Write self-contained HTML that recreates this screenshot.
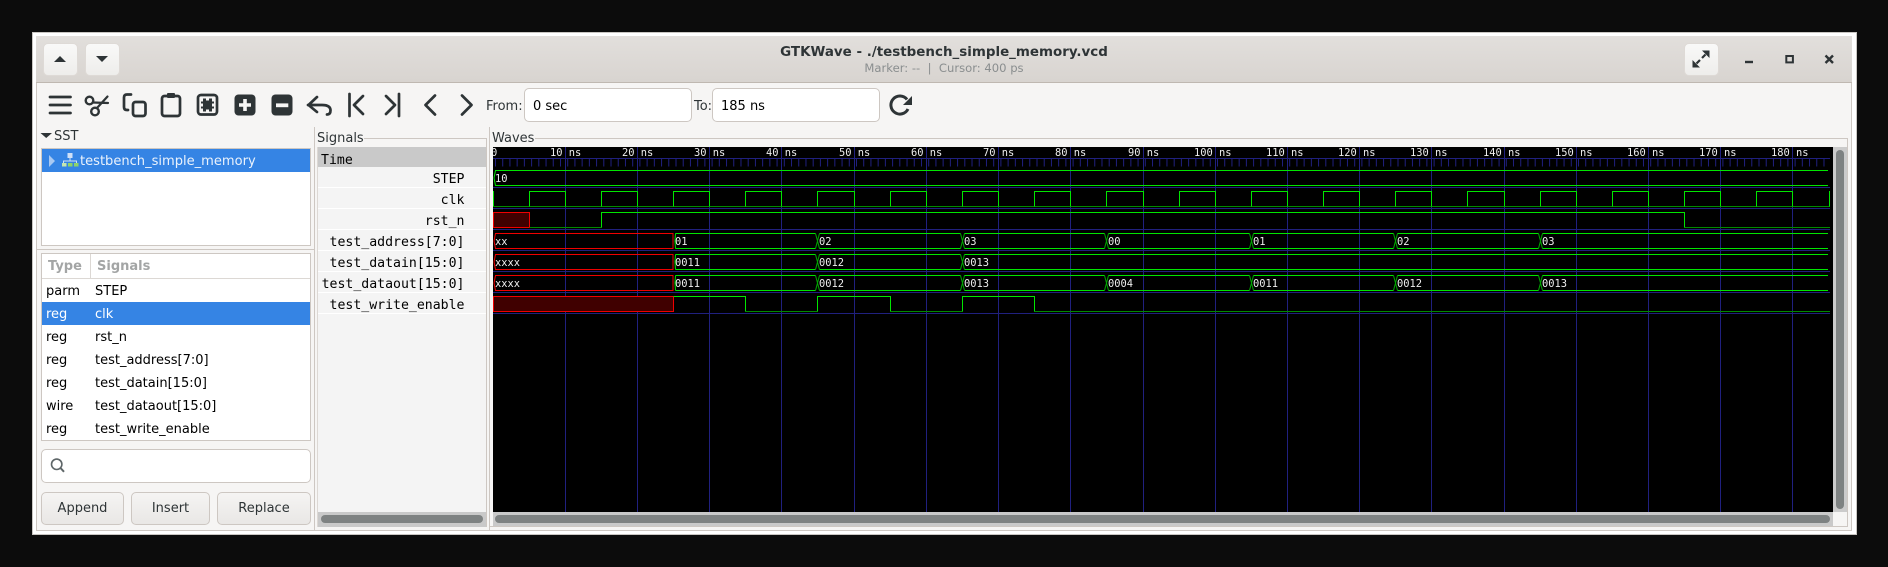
<!DOCTYPE html>
<html><head><meta charset="utf-8"><title>GTKWave</title>
<style>
html,body{margin:0;padding:0;width:1888px;height:567px;overflow:hidden;background:#0c0c0c}
body{font-family:"DejaVu Sans",sans-serif;font-size:13px;color:#2e3436;position:relative}
.a{position:absolute;box-sizing:border-box}
.t{position:absolute;white-space:nowrap;line-height:16px}
.hb{position:absolute;top:42.5px;width:35px;height:33px;border-radius:5px;background:linear-gradient(#f9f9f8,#eeedeb);border:1px solid #dedad6;box-sizing:border-box}
.btn{position:absolute;top:492px;height:33px;box-sizing:border-box;border:1px solid #cdc7c2;border-radius:5px;background:linear-gradient(#f5f4f3,#e9e7e5);text-align:center;line-height:32px;font-size:13px;color:#2e3436}
.entry{position:absolute;top:88px;height:34px;box-sizing:border-box;border:1px solid #cdc7c2;border-radius:5px;background:#fff;font-size:13px;line-height:35px;padding-left:8px;color:#000}
.m{font-family:"DejaVu Sans Mono",monospace;font-size:13.2px;color:#000;text-align:right;right:1423.5px}
.r{position:absolute;left:42px;width:268px;height:23px;line-height:25.5px;color:#000;white-space:nowrap}
.r b{font-weight:normal;position:absolute;left:4px}
.r i{font-style:normal;position:absolute;left:53px}
.sel{background:#3584e4;color:#fff}
svg text{font-family:"DejaVu Sans Mono",monospace;font-size:10.4px;fill:#eee}
</style></head><body>
<!-- window -->
<div class="a" style="left:32px;top:32px;width:1825px;height:503px;background:#fff;border:1px solid #c9c6c2"></div>
<div class="a" style="left:36px;top:36px;width:1816px;height:495px;background:#f6f5f4;border-left:1px solid #cdc7c2;border-right:1px solid #cdc7c2;border-bottom:1px solid #cdc7c2"></div>
<div class="a" style="left:36px;top:36px;width:1816px;height:47px;background:linear-gradient(#e2dfdc,#d8d4d0);border-bottom:1px solid #bfb8b1"></div>
<div class="hb" style="left:42.5px"></div>
<div class="hb" style="left:84.5px"></div>
<div class="hb" style="left:1683.5px"></div>
<div class="t" style="left:600px;width:688px;text-align:center;top:45px;font-weight:bold;font-size:13.44px;color:#2e3436">GTKWave - ./testbench_simple_memory.vcd</div>
<div class="t" style="left:600px;width:688px;text-align:center;top:60px;font-size:11.6px;color:#8a8e8f;white-space:pre">Marker: --  |  Cursor: 400 ps</div>
<!-- toolbar text -->
<div class="t" style="left:486px;top:98.5px;color:#2e3436">From:</div>
<div class="entry" style="left:524px;width:168px">0 sec</div>
<div class="t" style="left:694px;top:98.5px;color:#2e3436">To:</div>
<div class="entry" style="left:712px;width:168px">185 ns</div>
<!-- panes -->
<div class="a" style="left:314px;top:127px;width:1px;height:403px;background:#cdc7c2"></div>
<div class="a" style="left:489px;top:127px;width:1px;height:403px;background:#cdc7c2"></div>
<div class="a" style="left:37px;top:249px;width:277px;height:1px;background:#cdc7c2"></div>
<div class="t" style="left:54px;top:129px;color:#2e3436">SST</div>
<!-- tree -->
<div class="a" style="left:41px;top:148px;width:270px;height:98px;background:#fff;border:1px solid #cdc7c2"></div>
<div class="a sel" style="left:42px;top:149px;width:268px;height:23px"></div>
<div class="t" style="left:80px;top:154px;font-size:13.05px;color:#eaf2fc">testbench_simple_memory</div>
<!-- list -->
<div class="a" style="left:41px;top:253px;width:270px;height:188px;background:#fff;border:1px solid #cdc7c2"></div>
<div class="a" style="left:42px;top:278px;width:268px;height:1px;background:#dcd8d4"></div>
<div class="a" style="left:90px;top:254px;width:1px;height:24px;background:#dcd8d4"></div>
<div class="t" style="left:48px;top:259px;font-weight:bold;color:#a3a5a5">Type</div>
<div class="t" style="left:97px;top:259px;font-weight:bold;color:#a3a5a5">Signals</div>
<div class="r" style="top:279px"><b>parm</b><i>STEP</i></div>
<div class="r sel" style="top:302px"><b>reg</b><i>clk</i></div>
<div class="r" style="top:325px"><b>reg</b><i>rst_n</i></div>
<div class="r" style="top:348px"><b>reg</b><i>test_address[7:0]</i></div>
<div class="r" style="top:371px"><b>reg</b><i>test_datain[15:0]</i></div>
<div class="r" style="top:394px"><b>wire</b><i>test_dataout[15:0]</i></div>
<div class="r" style="top:417px"><b>reg</b><i>test_write_enable</i></div>
<!-- search -->
<div class="a" style="left:41px;top:449px;width:270px;height:34px;background:#fff;border:1px solid #cdc7c2;border-radius:5px"></div>
<div class="btn" style="left:41px;width:83px">Append</div>
<div class="btn" style="left:131px;width:79px">Insert</div>
<div class="btn" style="left:217px;width:94px">Replace</div>
<!-- signals frame -->
<div class="t" style="left:317px;top:131px;color:#2e3436">Signals</div>
<div class="a" style="left:364px;top:138px;width:123px;height:1px;background:#cdc7c2"></div>
<div class="a" style="left:486px;top:138px;width:1px;height:389px;background:#cdc7c2"></div>
<div class="a" style="left:317px;top:147px;width:169px;height:380px;background:#f4f4f4;border-left:1px solid #dcd8d4"></div>
<div class="a" style="left:318px;top:147px;width:168px;height:20px;background:#c9c9c9"></div>
<div class="t" style="left:321px;top:153px;font-family:'DejaVu Sans Mono',monospace;font-size:13.2px;color:#000">Time</div>
<div class="a" style="left:318px;top:187px;width:168px;height:1px;background:#fff"></div>
<div class="a" style="left:318px;top:208px;width:168px;height:1px;background:#fff"></div>
<div class="a" style="left:318px;top:229px;width:168px;height:1px;background:#fff"></div>
<div class="a" style="left:318px;top:250px;width:168px;height:1px;background:#fff"></div>
<div class="a" style="left:318px;top:271px;width:168px;height:1px;background:#fff"></div>
<div class="a" style="left:318px;top:292px;width:168px;height:1px;background:#fff"></div>
<div class="a" style="left:318px;top:313px;width:168px;height:1px;background:#fff"></div>
<div class="t m" style="top:172px">STEP</div>
<div class="t m" style="top:193px">clk</div>
<div class="t m" style="top:214px">rst_n</div>
<div class="t m" style="top:235px">test_address[7:0]</div>
<div class="t m" style="top:256px">test_datain[15:0]</div>
<div class="t m" style="top:277px">test_dataout[15:0]</div>
<div class="t m" style="top:298px">test_write_enable</div>
<div class="a" style="left:318px;top:512px;width:168px;height:15px;background:#c9c9c9"></div>
<div class="a" style="left:321px;top:515px;width:162px;height:8px;background:#7e8282;border-radius:4px"></div>
<!-- waves frame -->
<div class="t" style="left:492px;top:131px;color:#2e3436">Waves</div>
<div class="a" style="left:535px;top:138px;width:1313px;height:1px;background:#cdc7c2"></div>
<div class="a" style="left:1847px;top:138px;width:1px;height:389px;background:#cdc7c2"></div>
<div class="a" style="left:490px;top:526px;width:1358px;height:1px;background:#cdc7c2"></div>
<div class="a" style="left:493px;top:512px;width:1340px;height:14px;background:#c9c9c9"></div>
<div class="a" style="left:495px;top:515px;width:1335px;height:8px;background:#7e8282;border-radius:4px"></div>
<div class="a" style="left:1833px;top:147px;width:14px;height:365px;background:#cbcbcb"></div>
<div class="a" style="left:1836px;top:150px;width:8px;height:359px;background:#7e8282;border-radius:4px"></div>
<div class="a" style="left:493px;top:147px;width:1340px;height:365px;background:#000"></div>

<!-- icons and waves overlay -->
<svg class="a" style="left:0;top:0" width="1888" height="567" viewBox="0 0 1888 567" xmlns="http://www.w3.org/2000/svg">
<!-- header icons -->
<path d="M54 62L60 56L66 62Z" fill="#2e3436"/>
<path d="M96 56L102 62L108 56Z" fill="#2e3436"/>
<path d="M1709.5 50.5H1702L1709.5 58ZM1692.5 67.5H1700L1692.5 60Z" fill="#2e3436"/>
<path d="M1705.5 54.5L1702 58M1696.5 63.5L1700 60" stroke="#2e3436" stroke-width="2.2" fill="none"/>
<path d="M1745 62H1753" stroke="#2e3436" stroke-width="2.4"/>
<rect x="1786.3" y="56" width="6.6" height="6.4" fill="none" stroke="#2e3436" stroke-width="2"/>
<path d="M1825.5 55.5L1833 63M1833 55.5L1825.5 63" stroke="#2e3436" stroke-width="2.4"/>
<!-- toolbar icons -->
<g fill="none" stroke="#2e3436" stroke-width="2.7" stroke-linecap="round" stroke-linejoin="round">
<path d="M50 97H70.5M50 105H70.5M50 113H70.5"/>
<circle cx="89.5" cy="100.5" r="3.8" stroke-width="2.4"/>
<circle cx="95" cy="111.5" r="3.8" stroke-width="2.4"/>
<path d="M93 102.5L108 103M97 108L107.5 96.5" stroke-width="2.2"/>
<rect x="133" y="102" width="12.5" height="14" rx="2.5"/>
<path d="M131 94.5H127Q124 94.5 124 97.5V107Q124 110 127 110H128"/>
<rect x="162" y="96" width="18" height="20" rx="2.5"/>
<rect x="198" y="95" width="19" height="19.5" rx="3"/>
<path d="M308 105H322Q330.5 105 330.5 110.5Q330.5 114.5 327 114.5M317 97L308.5 105L317 112"/>
<path d="M349.5 94V116M363 96L354 105L363 114"/>
<path d="M399 94V116M386 96L395 105L386 114"/>
<path d="M435 95.5L425.5 105L435 114.5"/>
<path d="M462 95.5L471.5 105L462 114.5"/>
<path d="M907 99.5A9 9 0 1 0 908 109" stroke-width="3" stroke-linecap="butt"/>
</g>
<g fill="#2e3436">
<path d="M912 96V105H903Z"/>
<rect x="167" y="93" width="8" height="5" rx="1"/>
<path d="M203 98.5H206V100.5H209V98.5H212V101.5H214V103.5H212V106.5H214V108.5H212V111.5H209V109.5H206V111.5H203V108.5H201V106.5H203V103.5H201V101.5H203Z"/>
<rect x="234.5" y="94.5" width="21" height="21" rx="4"/>
<rect x="271.5" y="94.5" width="21" height="21" rx="4"/>
</g>
<path d="M239 105H251M245 99V111" stroke="#f6f5f4" stroke-width="3.6"/>
<path d="M276 105.3H288.3" stroke="#f6f5f4" stroke-width="3.8"/>
<!-- sst icons -->
<path d="M40.5 133H52L46.2 138Z" fill="#2e3436"/>
<path d="M49 155V167L55 161Z" fill="#a9c9f2"/>
<rect x="67.5" y="153" width="5" height="5" fill="#cfe0f7"/>
<path d="M70 158V161M63.5 163V161H76.5V163" stroke="#cfe0f7" stroke-width="1" fill="none"/>
<rect x="62" y="163" width="4.5" height="3.5" fill="#c5e6b0"/>
<rect x="68" y="163" width="4.5" height="3.5" fill="#8fd46a"/>
<rect x="74" y="163" width="4.5" height="3.5" fill="#8fd46a"/>
<!-- search -->
<circle cx="56.7" cy="464.3" r="5.2" fill="none" stroke="#5e6668" stroke-width="1.6"/>
<path d="M60.5 468L64 471.8" stroke="#5e6668" stroke-width="2"/>
<!-- waves -->
<svg x="493" y="147" width="1340" height="365" viewBox="493 147 1340 365">
<g fill="none" stroke="#20207f" stroke-width="1">
<path d="M493 158.5H1830M493 187.5H1830M493 208.5H1830M493 229.5H1830M493 250.5H1830M493 271.5H1830M493 292.5H1830M493 313.5H1830"/>
<path d="M495 162.5H1830" stroke-width="8" stroke-dasharray="1 6.22"/>
<path d="M565.5 147V512M637.5 147V512M709.5 147V512M781.5 147V512M854.5 147V512M926.5 147V512M998.5 147V512M1070.5 147V512M1143.5 147V512M1215.5 147V512M1287.5 147V512M1359.5 147V512M1431.5 147V512M1504.5 147V512M1576.5 147V512M1648.5 147V512M1720.5 147V512M1792.5 147V512"/>
</g>
<text x="491" y="156">0</text>
<text x="550" y="156">10 ns</text><text x="622" y="156">20 ns</text><text x="694" y="156">30 ns</text><text x="766" y="156">40 ns</text><text x="839" y="156">50 ns</text><text x="911" y="156">60 ns</text><text x="983" y="156">70 ns</text><text x="1055" y="156">80 ns</text><text x="1128" y="156">90 ns</text>
<text x="1194" y="156">100 ns</text><text x="1266" y="156">110 ns</text><text x="1338" y="156">120 ns</text><text x="1410" y="156">130 ns</text><text x="1483" y="156">140 ns</text><text x="1555" y="156">150 ns</text><text x="1627" y="156">160 ns</text><text x="1699" y="156">170 ns</text><text x="1771" y="156">180 ns</text>
<g fill="none" stroke-width="1">
<!-- STEP -->
<path d="M494 178L495.5 170.5H1828M494 178L495.5 185.5H1828" stroke="#00e600"/>
<!-- clk -->
<path d="M493.5 206.5H1830" stroke="#008a00"/>
<path d="M493.5 191V206.5M529.5 206.5V191.5H565.5V206.5M601.5 206.5V191.5H637.5V206.5M673.5 206.5V191.5H709.5V206.5M745.5 206.5V191.5H781.5V206.5M817.5 206.5V191.5H854.5V206.5M890.5 206.5V191.5H926.5V206.5M962.5 206.5V191.5H998.5V206.5M1034.5 206.5V191.5H1070.5V206.5M1106.5 206.5V191.5H1143.5V206.5M1179.5 206.5V191.5H1215.5V206.5M1251.5 206.5V191.5H1287.5V206.5M1323.5 206.5V191.5H1359.5V206.5M1395.5 206.5V191.5H1431.5V206.5M1467.5 206.5V191.5H1504.5V206.5M1540.5 206.5V191.5H1576.5V206.5M1612.5 206.5V191.5H1648.5V206.5M1684.5 206.5V191.5H1720.5V206.5M1756.5 206.5V191.5H1792.5V206.5M1829.5 206.5V191" stroke="#00e600"/>
<!-- rst_n -->
<rect x="493.5" y="212.5" width="36" height="15" fill="#400000" stroke="#f00000"/>
<path d="M529.5 227.5H601.5M1684.5 227.5H1830" stroke="#008a00"/>
<path d="M601.5 227.5V212.5H1684.5V227.5" stroke="#00e600"/>
<!-- address -->
<path d="M495.5 233.5H673V248.5H495.5L494 241Z" stroke="#f00000"/>
<path id="b1" d="M675.5 233.5H815.5M819.5 233.5H960.5M964.5 233.5H1104.5M1108.5 233.5H1249.5M1253.5 233.5H1393.5M1397.5 233.5H1538.5M1542.5 233.5H1828M675.5 248.5H815.5M819.5 248.5H960.5M964.5 248.5H1104.5M1108.5 248.5H1249.5M1253.5 248.5H1393.5M1397.5 248.5H1538.5M1542.5 248.5H1828M675.5 233.5L675 241L675.5 248.5" stroke="#00e600"/>
<path id="x1" d="M815.5 233.5L819.5 248.5M815.5 248.5L819.5 233.5M960.5 233.5L964.5 248.5M960.5 248.5L964.5 233.5M1104.5 233.5L1108.5 248.5M1104.5 248.5L1108.5 233.5M1249.5 233.5L1253.5 248.5M1249.5 248.5L1253.5 233.5M1393.5 233.5L1397.5 248.5M1393.5 248.5L1397.5 233.5M1538.5 233.5L1542.5 248.5M1538.5 248.5L1542.5 233.5" stroke="#00a800"/>
<!-- datain -->
<path d="M495.5 254.5H673V269.5H495.5L494 262Z" stroke="#f00000"/>
<path d="M675.5 254.5H815.5M819.5 254.5H960.5M964.5 254.5H1828M675.5 269.5H815.5M819.5 269.5H960.5M964.5 269.5H1828M675.5 254.5L675 262L675.5 269.5" stroke="#00e600"/>
<path d="M815.5 254.5L819.5 269.5M815.5 269.5L819.5 254.5M960.5 254.5L964.5 269.5M960.5 269.5L964.5 254.5" stroke="#00a800"/>
<!-- dataout -->
<path d="M495.5 275.5H673V290.5H495.5L494 283Z" stroke="#f00000"/>
<use href="#b1" y="42"/><use href="#x1" y="42"/>
<!-- write_enable -->
<rect x="493.5" y="296.5" width="180" height="15" fill="#400000" stroke="#f00000"/>
<path d="M745.5 311.5H817.5M890.5 311.5H962.5M1034.5 311.5H1830" stroke="#008a00"/>
<path d="M673.5 296.5H745.5V311.5M817.5 311.5V296.5H890.5V311.5M962.5 311.5V296.5H1034.5V311.5" stroke="#00e600"/>
</g>
<text x="495" y="182">10</text>
<text x="495" y="245">xx</text><text x="675" y="245">01</text><text x="819" y="245">02</text><text x="964" y="245">03</text><text x="1108" y="245">00</text><text x="1253" y="245">01</text><text x="1397" y="245">02</text><text x="1542" y="245">03</text>
<text x="495" y="266">xxxx</text><text x="675" y="266">0011</text><text x="819" y="266">0012</text><text x="964" y="266">0013</text>
<text x="495" y="287">xxxx</text><text x="675" y="287">0011</text><text x="819" y="287">0012</text><text x="964" y="287">0013</text><text x="1108" y="287">0004</text><text x="1253" y="287">0011</text><text x="1397" y="287">0012</text><text x="1542" y="287">0013</text>
</svg>
</svg>
</body></html>
